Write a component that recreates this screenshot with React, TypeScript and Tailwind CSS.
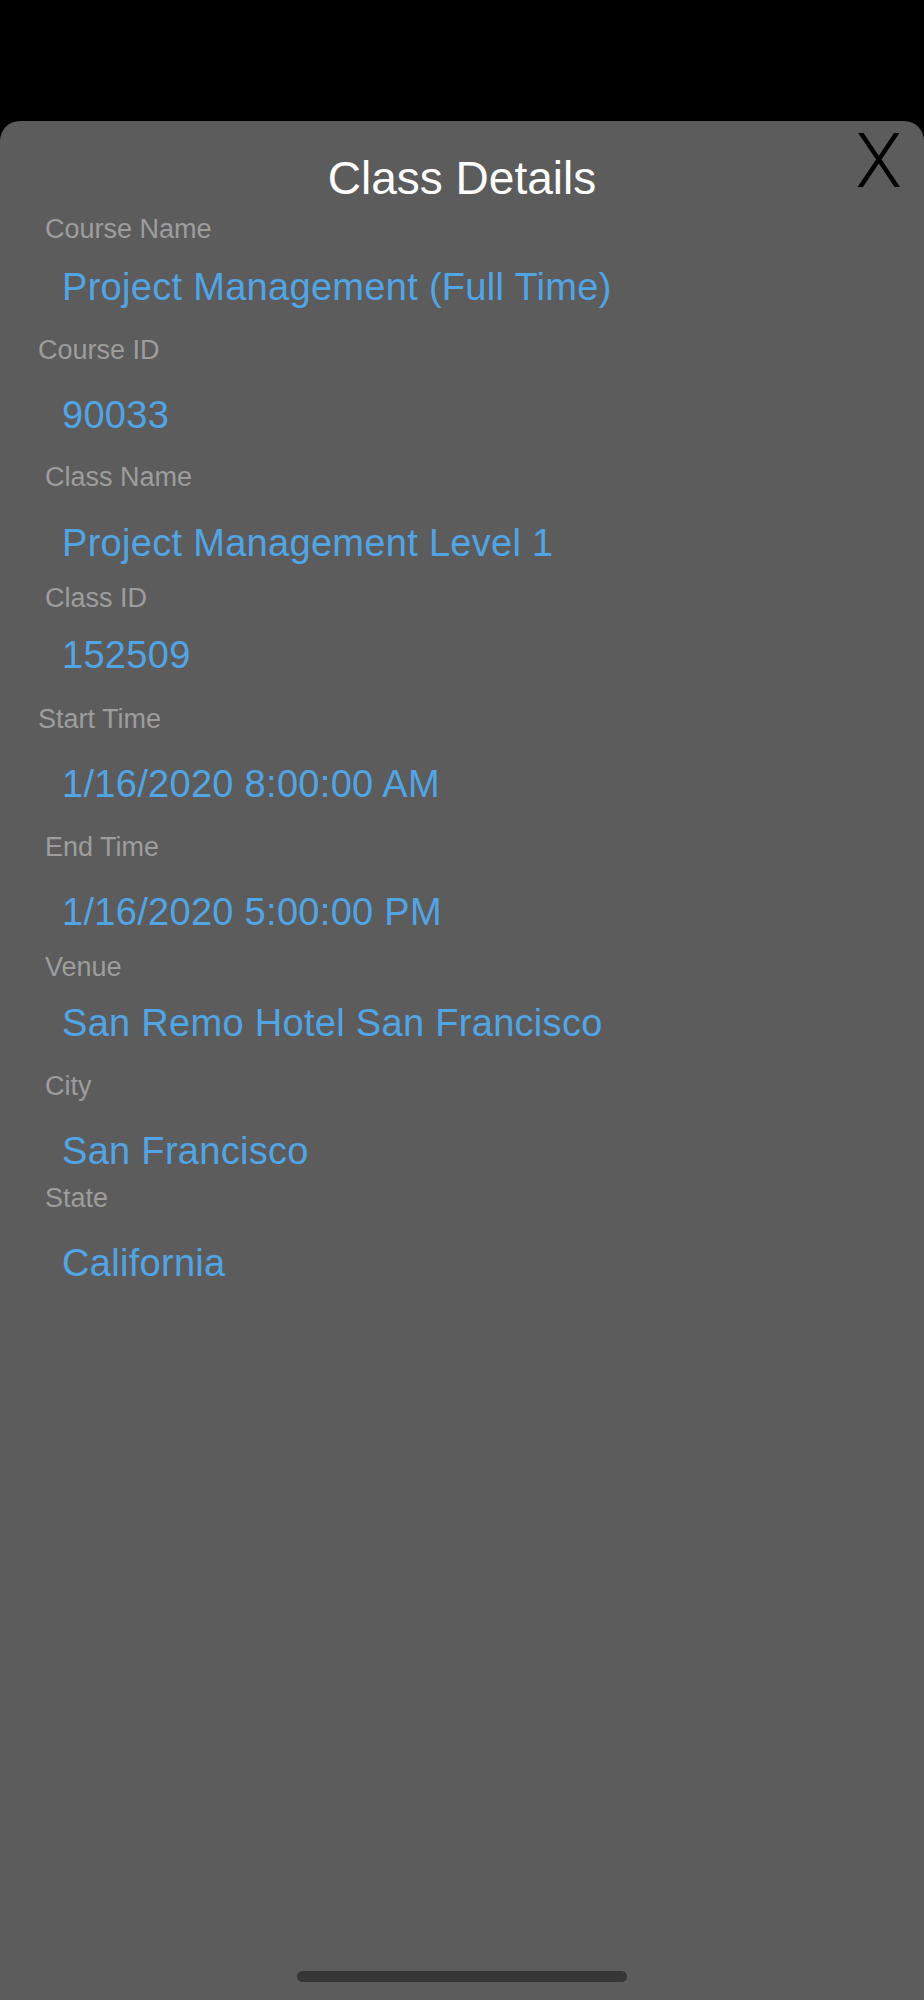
import React from 'react';

type Field = {
  label: string;
  value: string;
  labelIndent: string;
  labelGap: string;
  valueGap: string;
};

const fields: Field[] = [
  { label: 'Course Name', value: 'Project Management (Full Time)', labelIndent: 'pl-[45px]', labelGap: 'mt-[15px]', valueGap: 'mt-[25px]' },
  { label: 'Course ID', value: '90033', labelIndent: 'pl-[38px]', labelGap: 'mt-[31px]', valueGap: 'mt-[32px]' },
  { label: 'Class Name', value: 'Project Management Level 1', labelIndent: 'pl-[45px]', labelGap: 'mt-[30px]', valueGap: 'mt-[33px]' },
  { label: 'Class ID', value: '152509', labelIndent: 'pl-[45px]', labelGap: 'mt-[23px]', valueGap: 'mt-[24px]' },
  { label: 'Start Time', value: '1/16/2020 8:00:00 AM', labelIndent: 'pl-[38px]', labelGap: 'mt-[32px]', valueGap: 'mt-[32px]' },
  { label: 'End Time', value: '1/16/2020 5:00:00 PM', labelIndent: 'pl-[45px]', labelGap: 'mt-[31px]', valueGap: 'mt-[32px]' },
  { label: 'Venue', value: 'San Remo Hotel San Francisco', labelIndent: 'pl-[45px]', labelGap: 'mt-[23px]', valueGap: 'mt-[23px]' },
  { label: 'City', value: 'San Francisco', labelIndent: 'pl-[45px]', labelGap: 'mt-[31px]', valueGap: 'mt-[32px]' },
  { label: 'State', value: 'California', labelIndent: 'pl-[45px]', labelGap: 'mt-[15px]', valueGap: 'mt-[32px]' },
];

export default function App() {
  return (
    <div className="bg-black h-[2000px] w-full overflow-hidden pt-[121px] font-['Liberation_Sans',Arial,sans-serif]">
      <div className="relative bg-[#5c5c5c] rounded-t-[20px] h-[1879px] flex flex-col">
        <button className="absolute top-[2px] right-[22px] text-black text-[76px] leading-[76px] font-light font-['Roboto',sans-serif]">
          X
        </button>

        <h1 className="mt-[34px] text-center text-white text-[46px] leading-[46px]">Class Details</h1>

        <div className="flex flex-col">
          {fields.map((f) => (
            <div key={f.label} className="flex flex-col">
              <span className={`${f.labelGap} ${f.labelIndent} text-[#9d9d9d] text-[27px] leading-[27px]`}>
                {f.label}
              </span>
              <span className={`${f.valueGap} pl-[62px] text-[#52a5e4] text-[38px] leading-[38px] tracking-[0.3px]`}>
                {f.value}
              </span>
            </div>
          ))}
        </div>

        <div className="flex-1" />
        <div className="mx-auto mb-[18px] w-[330px] h-[11px] rounded-full bg-[#363636]" />
      </div>
    </div>
  );
}
